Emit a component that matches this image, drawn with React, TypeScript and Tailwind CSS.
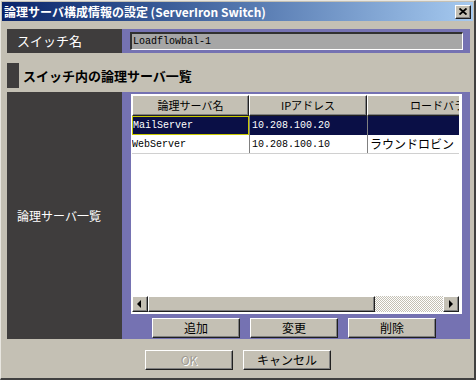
import React from "react";

const jp = "font-['Noto_Sans_CJK_JP','Noto_Sans',sans-serif]";
const mono = "font-['Liberation_Mono','Noto_Sans_CJK_JP',monospace]";
const raised =
  "bg-[#c4c0b4] border-t border-l border-t-white border-l-white border-r border-b border-r-[#202020] border-b-[#202020] shadow-[inset_-1px_-1px_0_#808080]";

function Btn({ label, disabled }: { label: string; disabled?: boolean }) {
  return (
    <div
      className={`${raised} w-[88px] h-[20px] flex items-center justify-center text-[12px] leading-none ${jp} ${
        disabled ? "text-[#a09c94] [text-shadow:1px_1px_0_#fff]" : "text-black"
      }`}
    >
      {label}
    </div>
  );
}

function Arrow({ dir }: { dir: "left" | "right" }) {
  return (
    <div className={`${raised} w-[16px] h-full shrink-0 flex items-center justify-center`}>
      <svg width="6" height="8" viewBox="0 0 6 8">
        {dir === "left" ? <path d="M4 0v8L0 4z" fill="#000" /> : <path d="M1 0v8l4-4z" fill="#000" />}
      </svg>
    </div>
  );
}

export default function App() {
  return (
    <div className="w-[476px] h-[380px] bg-[#c4c0b4] box-border border-t border-l border-t-[#e8e6e0] border-l-[#e8e6e0] border-r-2 border-b-2 border-r-[#404040] border-b-[#404040] p-[1px] flex flex-col">
      {/* title bar */}
      <div className="h-[19px] shrink-0 flex items-center justify-between pl-[2px] pr-[2px] bg-gradient-to-r from-[#0a246a] to-[#a6caf0]">
        <span className={`text-white font-bold text-[12px] leading-none whitespace-nowrap ${jp}`}>
          論理サーバ構成情報の設定 (ServerIron Switch)
        </span>
        <div className={`${raised} shrink-0 w-[16px] h-[14px] flex items-center justify-center`}>
          <svg width="8" height="7" viewBox="0 0 8 7">
            <path d="M0.5 0.5l7 6M7.5 0.5l-7 6" stroke="#000" strokeWidth="1.8" />
          </svg>
        </div>
      </div>

      <div className="flex flex-col pl-[5px] pr-[3px] pt-[8px]">
        {/* switch name */}
        <div className="flex h-[24px]">
          <div className={`w-[115px] bg-[#3f3d3d] text-white text-[13px] flex items-center pl-[10px] ${jp}`}>
            スイッチ名
          </div>
          <div className="flex-1 bg-[#7572b2] flex items-center pl-[8px] pr-[7px]">
            <div className="w-full h-[18px] bg-[#a6a6a6] border-t-2 border-l-2 border-t-[#303030] border-l-[#303030] border-r border-b border-r-white border-b-white flex items-center pl-[1px]">
              <span className={`text-[10px] text-black ${mono}`}>Loadflowbal-1</span>
            </div>
          </div>
        </div>

        {/* section header */}
        <div className="flex items-center h-[25px] mt-[10px] gap-[4px]">
          <div className="w-[12px] h-full bg-[#3f3d3d]" />
          <span className={`font-bold text-[13px] text-black ${jp}`}>スイッチ内の論理サーバ一覧</span>
        </div>

        {/* list */}
        <div className="flex h-[247px] mt-[4px]">
          <div className={`w-[115px] bg-[#3f3d3d] text-white text-[12px] flex items-center pl-[10px] ${jp}`}>
            論理サーバ一覧
          </div>
          <div className="flex-1 bg-[#7572b2] pl-[9px] pt-[2px] flex flex-col">
            <div className="w-[331px] h-[220px] bg-white pt-[1px] pl-[1px] pr-[3px] pb-[2px] flex flex-col">
              <div className="flex-1 overflow-hidden">
                <div className="flex h-[21px] w-[420px]">
                  <div className={`${raised} w-[117px] flex items-center justify-center text-[11px] ${jp}`}>論理サーバ名</div>
                  <div className={`${raised} w-[118px] flex items-center justify-center text-[11px] ${jp}`}>IPアドレス</div>
                  <div className={`${raised} w-[185px] flex items-center justify-center text-[11px] ${jp}`}>ロードバランス方式</div>
                </div>
                <div className="flex h-[19px] w-[420px] bg-[#0a0f46] text-white">
                  <div className="w-[117px] border border-[#c8c800] flex items-center">
                    <span className={`text-[10px] ${mono}`}>MailServer</span>
                  </div>
                  <div className="w-[118px] border-l border-[#808080] flex items-center pl-[2px]">
                    <span className={`text-[10px] ${mono}`}>10.208.100.20</span>
                  </div>
                  <div className="w-[185px] border-l border-[#808080]" />
                </div>
                <div className="flex h-[19px] w-[420px] text-black border-b border-[#d0d0d0]">
                  <div className="w-[117px] flex items-center">
                    <span className={`text-[10px] ${mono}`}>WebServer</span>
                  </div>
                  <div className="w-[118px] border-l border-[#808080] flex items-center pl-[2px]">
                    <span className={`text-[10px] ${mono}`}>10.208.100.10</span>
                  </div>
                  <div className={`w-[185px] border-l border-[#808080] flex items-center pl-[2px] text-[12px] ${jp}`}>
                    ラウンドロビン
                  </div>
                </div>
              </div>
              {/* scrollbar */}
              <div className="h-[16px] flex">
                <Arrow dir="left" />
                <div className={`${raised} w-[227px] h-full`} />
                <div className="flex-1 h-full bg-[repeating-conic-gradient(#c4c0b4_0_25%,#ffffff_0_50%)] bg-[length:2px_2px]" />
                <Arrow dir="right" />
              </div>
            </div>
            <div className="flex gap-[10px] pl-[21px] mt-[4px]">
              <Btn label="追加" />
              <Btn label="変更" />
              <Btn label="削除" />
            </div>
          </div>
        </div>

        {/* footer */}
        <div className="flex gap-[10px] pl-[138px] mt-[11px]">
          <Btn label="OK" disabled />
          <Btn label="キャンセル" />
        </div>
      </div>
    </div>
  );
}
